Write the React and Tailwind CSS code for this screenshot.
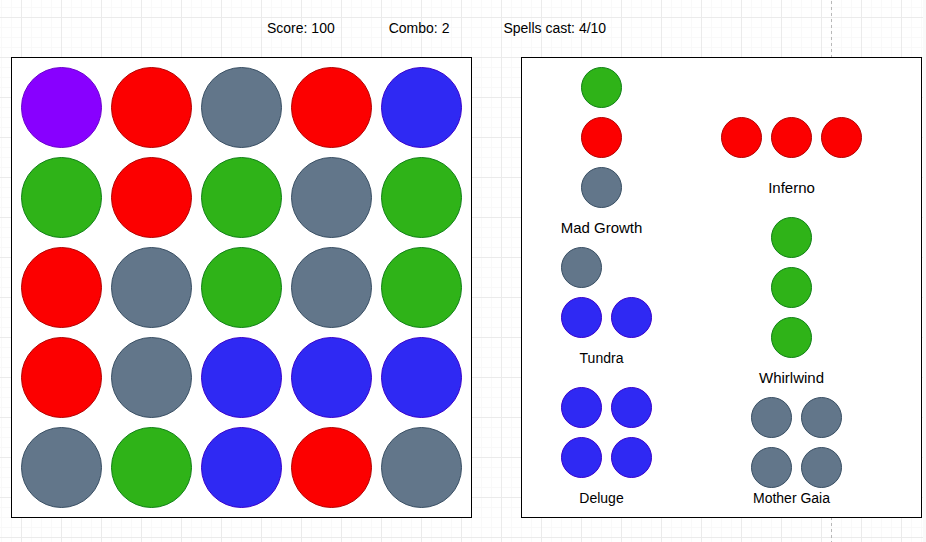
const ORB_COLORS = {
  purple: "bg-[#8800ff] border-[#6a00cc]",
  red: "bg-[#fc0000] border-[#b20000]",
  slate: "bg-[#62768a] border-[#384e63]",
  blue: "bg-[#2f29f3] border-[#3700cc]",
  green: "bg-[#2fb318] border-[#0f8015]",
};

const BOARD = [
  ["purple", "red", "slate", "red", "blue"],
  ["green", "red", "green", "slate", "green"],
  ["red", "slate", "green", "slate", "green"],
  ["red", "slate", "blue", "blue", "blue"],
  ["slate", "green", "blue", "red", "slate"],
];

function Orb({ color, size }) {
  return (
    <span className={`block shrink-0 rounded-full border ${size} ${ORB_COLORS[color]}`} />
  );
}

function Spell({ name, rows, labelClass, alignClass = "self-center" }) {
  return (
    <figure className="flex w-[81px] flex-col items-center">
      <div className={`flex flex-col gap-[9px] ${alignClass}`}>
        {rows.map((row, r) => (
          <div key={r} className="flex gap-[9px]">
            {row.map((color, c) => (
              <Orb key={c} color={color} size="size-[41px]" />
            ))}
          </div>
        ))}
      </div>
      <figcaption className={`leading-5 whitespace-nowrap ${labelClass}`}>{name}</figcaption>
    </figure>
  );
}

function Board() {
  return (
    <section
      aria-label="Board"
      className="grid shrink-0 grid-cols-[repeat(5,81px)] gap-[9px] border border-black bg-white p-[9px]"
    >
      {BOARD.flat().map((color, i) => (
        <button key={i} type="button" aria-label={`${color} orb`} className="block">
          <Orb color={color} size="size-[81px]" />
        </button>
      ))}
    </section>
  );
}

function SpellBook() {
  return (
    <section
      aria-label="Spells"
      className="flex flex-1 justify-between border border-black bg-white pr-[59px] pl-[39px]"
    >
      <div className="flex flex-col items-center pt-[9px]">
        <Spell
          name="Mad Growth"
          rows={[["green"], ["red"], ["slate"]]}
          labelClass="pt-[10px] pb-[9px] text-[15px]"
        />
        <Spell
          name="Tundra"
          rows={[["slate"], ["blue", "blue"]]}
          alignClass="self-start"
          labelClass="pt-[10px] pb-[19px] text-[14px]"
        />
        <Spell
          name="Deluge"
          rows={[["blue", "blue"], ["blue", "blue"]]}
          alignClass="self-start"
          labelClass="pt-[10px] pb-[9px] text-[14px]"
        />
      </div>
      <div className="flex w-[141px] flex-col items-center pt-[59px]">
        <Spell name="Inferno" rows={[["red", "red", "red"]]} labelClass="pt-5 pb-[19px] text-[15px]" />
        <Spell
          name="Whirlwind"
          rows={[["green"], ["green"], ["green"]]}
          labelClass="pt-[10px] pb-[9px] text-[15px]"
        />
        <Spell
          name="Mother Gaia"
          rows={[["slate", "slate"], ["slate", "slate"]]}
          alignClass="self-start"
          labelClass="text-[14px]"
        />
      </div>
    </section>
  );
}

export default function App() {
  return (
    <div className="min-h-screen bg-[#f9f9f9] pr-[3px] font-['Liberation_Sans',Arial,sans-serif] text-black">
      <div className="relative min-h-screen bg-white bg-[linear-gradient(to_right,#ebebeb_1px,transparent_1px),linear-gradient(to_bottom,#ebebeb_1px,transparent_1px),linear-gradient(to_right,#f9f9f9_1px,transparent_1px),linear-gradient(to_bottom,#f9f9f9_1px,transparent_1px)] bg-[size:40px_40px,40px_40px,10px_10px,10px_10px] bg-[position:21px_17px,21px_17px,1px_7px,1px_7px]">
        <div className="absolute inset-y-0 right-[91px] w-px bg-[repeating-linear-gradient(to_bottom,transparent_0px,transparent_1px,#b8b8b8_1px,#b8b8b8_4px,transparent_4px,transparent_6px)]" />
        <header className="mb-px flex h-14 items-center gap-[54px] pl-[267px] text-sm whitespace-nowrap">
          <p>Score: 100</p>
          <p>Combo: 2</p>
          <p>Spells cast: 4/10</p>
        </header>
        <main className="relative flex gap-[49px] pr-px pl-[11px]">
          <Board />
          <SpellBook />
        </main>
      </div>
    </div>
  );
}
